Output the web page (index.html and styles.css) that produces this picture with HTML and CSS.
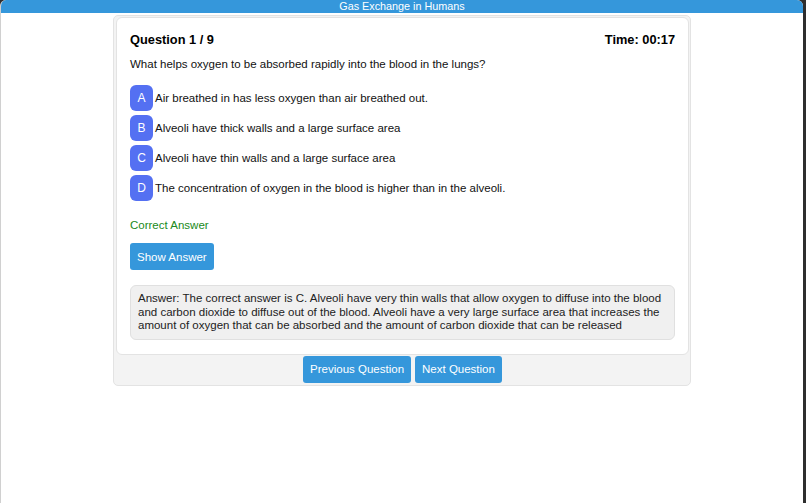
FILE: index.html
```html
<!DOCTYPE html>
<html>
<head>
<meta charset="utf-8">
<title>Gas Exchange in Humans</title>
<link rel="stylesheet" href="styles.css">
</head>
<body>
<div class="window">
  <header class="topbar">Gas Exchange in Humans</header>
  <main class="quiz">
    <section class="card">
      <div class="card-head">
        <h2 class="q-num">Question 1 / 9</h2>
        <div class="timer">Time: 00:17</div>
      </div>
      <p class="question">What helps oxygen to be absorbed rapidly into the blood in the lungs?</p>
      <ul class="options">
        <li class="option"><span class="badge">A</span><span class="opt-text">Air breathed in has less oxygen than air breathed out.</span></li>
        <li class="option"><span class="badge">B</span><span class="opt-text">Alveoli have thick walls and a large surface area</span></li>
        <li class="option"><span class="badge">C</span><span class="opt-text">Alveoli have thin walls and a large surface area</span></li>
        <li class="option"><span class="badge">D</span><span class="opt-text">The concentration of oxygen in the blood is higher than in the alveoli.</span></li>
      </ul>
      <p class="result">Correct Answer</p>
      <button class="btn show-btn">Show Answer</button>
      <div class="answer">Answer: The correct answer is C. Alveoli have very thin walls that allow oxygen to diffuse into the blood and carbon dioxide to diffuse out of the blood. Alveoli have a very large surface area that increases the amount of oxygen that can be absorbed and the amount of carbon dioxide that can be released</div>
    </section>
    <nav class="nav">
      <button class="btn">Previous Question</button>
      <button class="btn">Next Question</button>
    </nav>
  </main>
</div>
</body>
</html>
```
FILE: styles.css
```css
html {
  background: #2e2e2e;
}
body {
  margin: 0;
  font-family: "Liberation Sans", Arial, sans-serif;
  color: #111;
}
.window {
  width: 803px;
  height: 503px;
  background: #fff;
  border-left: 1px solid #d0d0d0;
  border-radius: 6px 6px 0 0;
  overflow: hidden;
  box-sizing: border-box;
}
.topbar {
  height: 13px;
  background: #3597db;
  color: #fff;
  font-size: 10.8px;
  line-height: 13px;
  text-align: center;
}
.quiz {
  width: 578px;
  margin: 2px 0 0 112px;
  background: #f3f3f3;
  border: 1px solid #e3e3e3;
  border-radius: 5px;
  padding: 1px 1px 1px 2px;
  box-sizing: border-box;
}
.card {
  background: #fff;
  border: 1px solid #e3e3e3;
  border-radius: 6px;
  padding: 13px 13px 14px 13px;
  display: flex;
  flex-direction: column;
  align-items: flex-start;
}
.card-head {
  align-self: stretch;
  display: flex;
  justify-content: space-between;
  align-items: center;
  font-size: 12.8px;
  font-weight: bold;
  line-height: 17px;
  color: #000;
}
.q-num {
  margin: 0;
  font-size: 12.8px;
}
.question {
  margin: 9px 0 0;
  font-size: 11.5px;
  line-height: 15px;
}
.options {
  list-style: none;
  margin: 13px 0 0;
  padding: 0;
  display: flex;
  flex-direction: column;
  gap: 4px;
}
.option {
  display: flex;
  align-items: center;
  gap: 2px;
  font-size: 11.5px;
}
.badge {
  width: 23px;
  height: 26px;
  background: #5470f2;
  color: #fff;
  border-radius: 6px;
  display: flex;
  align-items: center;
  justify-content: center;
  font-size: 12px;
}
.result {
  margin: 17px 0 0;
  font-size: 11.5px;
  line-height: 15px;
  color: #208a20;
}
.btn {
  font-family: "Liberation Sans", Arial, sans-serif;
  font-size: 11.5px;
  color: #fff;
  background: #3597db;
  border: none;
  border-radius: 3px;
  height: 27px;
  padding: 0 7px;
  cursor: pointer;
}
.show-btn {
  margin-top: 10px;
}
.answer {
  align-self: stretch;
  margin-top: 15px;
  background: #f0f0f0;
  border: 1px solid #e0e0e0;
  border-radius: 6px;
  padding: 6px 7px 6px;
  font-size: 11.5px;
  line-height: 13.5px;
  color: #222;
}
.nav {
  display: flex;
  justify-content: center;
  gap: 4px;
  padding: 1px 0 1px;
}
```
